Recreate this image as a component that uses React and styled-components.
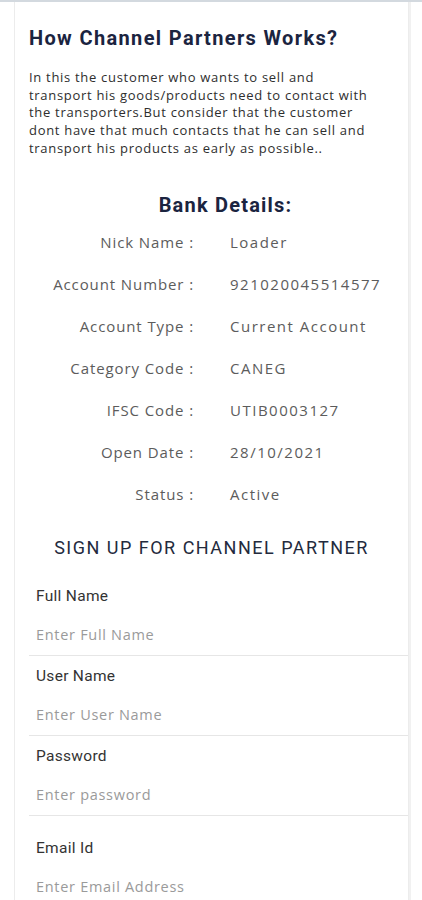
import React from 'react';
import styled, { createGlobalStyle } from 'styled-components';

const GlobalStyle = createGlobalStyle`
    * {
        box-sizing: border-box;
    }

    body {
        margin: 0;
        background-color: #ffffff;
        font-family: 'Open Sans', 'Noto Sans', sans-serif;
    }
`;

const descriptionLines = [
    'In this the customer who wants to sell and',
    'transport his goods/products need to contact with',
    'the transporters.But consider that the customer',
    'dont have that much contacts that he can sell and',
    'transport his products as early as possible..',
];

const bankDetails = [
    { label: 'Nick Name', value: 'Loader' },
    { label: 'Account Number', value: '921020045514577' },
    { label: 'Account Type', value: 'Current Account' },
    { label: 'Category Code', value: 'CANEG' },
    { label: 'IFSC Code', value: 'UTIB0003127' },
    { label: 'Open Date', value: '28/10/2021' },
    { label: 'Status', value: 'Active' },
];

const fields = [
    { label: 'Full Name', placeholder: 'Enter Full Name', type: 'text' },
    { label: 'User Name', placeholder: 'Enter User Name', type: 'text' },
    { label: 'Password', placeholder: 'Enter password', type: 'password' },
    { label: 'Email Id', placeholder: 'Enter Email Address', type: 'email', spaced: true },
];

const App = () => {
    return (
        <>
            <GlobalStyle />
            <Page>
                <Card>
                    <Title>How Channel Partners Works?</Title>
                    <Description>
                        {descriptionLines.map((line, i) => (
                            <React.Fragment key={i}>
                                {line}
                                {i < descriptionLines.length - 1 && <br />}
                            </React.Fragment>
                        ))}
                    </Description>

                    <BankTitle>Bank Details:</BankTitle>
                    <DetailsList>
                        {bankDetails.map((item) => (
                            <DetailRow key={item.label}>
                                <dt>{item.label} :</dt>
                                <dd>{item.value}</dd>
                            </DetailRow>
                        ))}
                    </DetailsList>

                    <SignUpTitle>Sign up for channel partner</SignUpTitle>
                    <Form onSubmit={(e) => e.preventDefault()}>
                        {fields.map((field) => (
                            <Field key={field.label} $spaced={field.spaced}>
                                <label>{field.label}</label>
                                <input type={field.type} placeholder={field.placeholder} />
                            </Field>
                        ))}
                    </Form>
                </Card>
            </Page>
        </>
    );
};

export default App;

const Page = styled.div`
    width: 100vw;
    height: 100vh;
    overflow: hidden;
    border-top: 2px solid #d3d9df;
    padding: 0 13px 0 14px;
`;

const Card = styled.div`
    min-height: 100%;
    background-color: #fff;
    border-left: 1px solid #ececec;
    border-right: 1px solid #ececec;
    box-shadow: 2px 0 0 #f1f1f1;
    padding: 22px 0 0;
`;

const Title = styled.h1`
    margin: 0 0 0 14px;
    font-family: 'Roboto', sans-serif;
    font-size: 20px;
    line-height: 28px;
    font-weight: bold;
    letter-spacing: 1.35px;
    color: #1b2440;
`;

const Description = styled.p`
    margin: 17px 8px 0 14px;
    white-space: nowrap;
    font-family: 'Open Sans', sans-serif;
    font-size: 13px;
    line-height: 17.7px;
    letter-spacing: 0.7px;
    color: #2e2e2e;
`;

const BankTitle = styled.h2`
    margin: 33px 0 0;
    padding-left: 28px;
    text-align: center;
    font-family: 'Roboto', sans-serif;
    font-size: 20px;
    line-height: 28px;
    font-weight: bold;
    letter-spacing: 1.2px;
    color: #1b2440;
`;

const DetailsList = styled.dl`
    display: flex;
    flex-direction: column;
    gap: 20px;
    margin: 12px 0 0;
`;

const DetailRow = styled.div`
    display: grid;
    grid-template-columns: 179px 1fr;
    column-gap: 36px;
    font-family: 'Open Sans', sans-serif;
    font-size: 15px;
    line-height: 22px;
    letter-spacing: 0.9px;
    color: #5c5c5c;

    dt {
        text-align: right;
    }

    dd {
        margin: 0;
        letter-spacing: 1.5px;
    }
`;

const SignUpTitle = styled.h3`
    margin: 31px 0 0;
    text-align: center;
    text-transform: uppercase;
    font-family: 'Roboto', sans-serif;
    font-size: 18px;
    line-height: 24px;
    font-weight: normal;
    letter-spacing: 1.5px;
    color: #232a3d;
`;

const Form = styled.form`
    display: flex;
    flex-direction: column;
    margin-top: 26px;
    padding-left: 14px;
`;

const Field = styled.div`
    display: flex;
    flex-direction: column;
    gap: 19px;
    padding: ${(p) => (p.$spaced ? '12px' : '0')} 0 10px 7px;
    border-bottom: 1px solid #e6e6e6;
    margin-bottom: 10px;

    label {
        font-family: 'Roboto', sans-serif;
        font-size: 15.5px;
        line-height: 20px;
        letter-spacing: 0.3px;
        color: #333;
    }

    input {
        border: none;
        outline: none;
        padding: 0;
        font-family: 'Open Sans', sans-serif;
        font-size: 14.5px;
        line-height: 20px;
        letter-spacing: 0.7px;
        color: #333;
        background: transparent;

        &::placeholder {
            color: #9a9a9a;
        }
    }
`;
